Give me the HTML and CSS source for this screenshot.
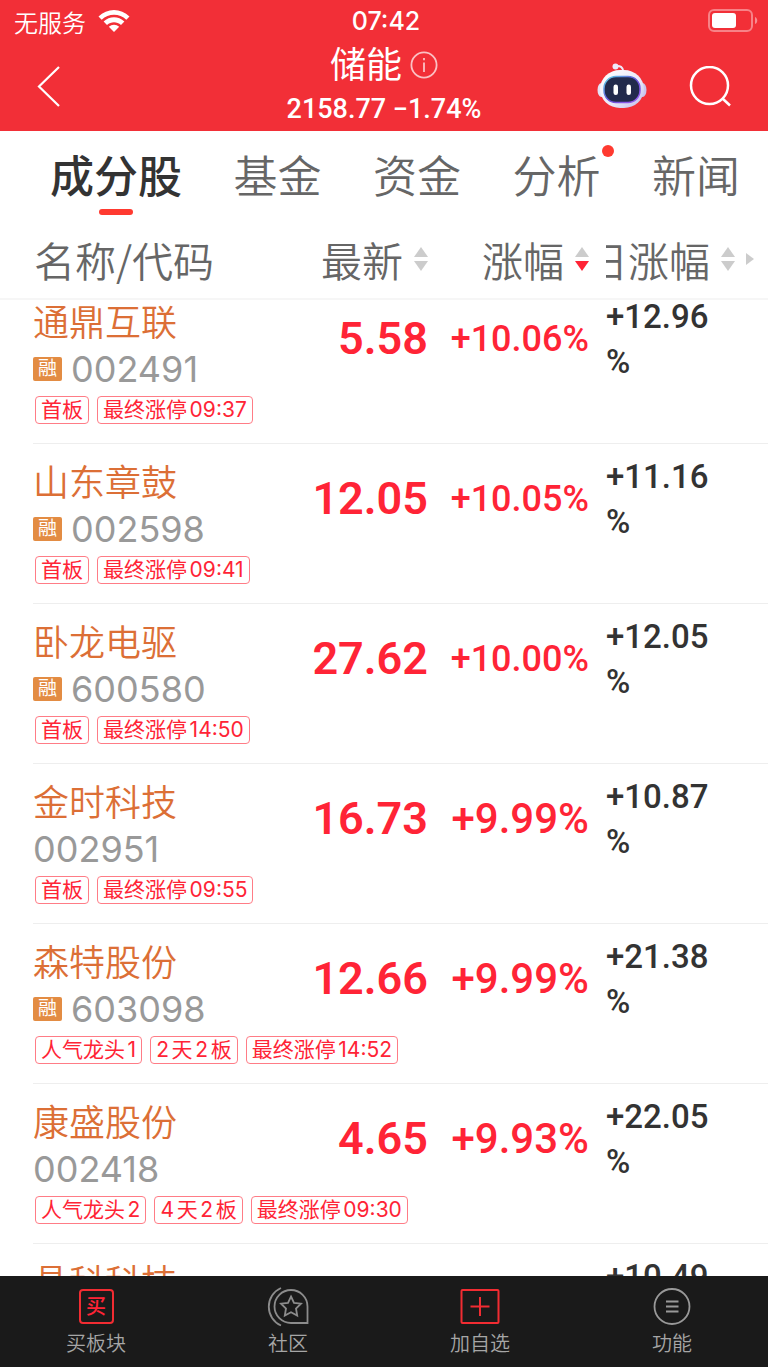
FILE: index.html
```html
<!DOCTYPE html>
<html lang="zh-CN">
<head>
    <meta charset="UTF-8">
    <meta name="viewport" content="width=device-width, initial-scale=1.0">
    <title>储能</title>
    <link rel="stylesheet" href="styles.css">
</head>
<body>
    <header class="header">
        <div class="status-bar">
            <div class="carrier">
                <span>无服务</span>
                <svg width="32" height="24" viewBox="0 0 32 24" fill="#fff">
                    <path d="M0.5 7.5C9 -1.2 23 -1.2 31.5 7.5L28.3 10.8C21.5 4 10.5 4 3.7 10.8Z"/>
                    <path d="M5.6 12.6C11.5 6.7 20.5 6.7 26.4 12.6L23 16C19 12.2 13 12.2 9 16Z"/>
                    <path d="M10.8 17.8C13.8 15 18.2 15 21.2 17.8L16 23Z"/>
                </svg>
            </div>
            <span class="time">07:42</span>
            <svg class="battery" width="50" height="24" viewBox="0 0 50 24">
                <rect x="1" y="1" width="43" height="21" rx="5" fill="none" stroke="#fff" stroke-opacity=".4" stroke-width="2"/>
                <rect x="4" y="4" width="24" height="15" rx="3" fill="#fff"/>
                <path d="M47 8C50 9 50 14 47 15Z" fill="#fff" fill-opacity=".45"/>
            </svg>
        </div>
        <div class="title-bar">
            <button class="icon-btn back" aria-label="返回">
                <svg width="24" height="42" viewBox="0 0 24 42" fill="none" stroke="#fff" stroke-width="2.2"><path d="M22 1L2 20.500L22 40"/></svg>
            </button>
            <div class="title">
                <h1>储能
                    <svg width="28" height="28" viewBox="0 0 28 28" fill="none" stroke="#fff" stroke-opacity=".7" stroke-width="1.8">
                        <circle cx="14" cy="14" r="12.6"/>
                        <path d="M14 11.5V21M14 7V9.2"/>
                    </svg>
                </h1>
                <p>2158.77 −1.74%</p>
            </div>
            <div class="actions">
                <button class="icon-btn" aria-label="智能助手">
                    <svg width="50" height="48" viewBox="0 0 50 48">
                        <defs>
                            <linearGradient id="shell" x1="0" y1="0" x2="1" y2="1">
                                <stop offset="0" stop-color="#fff"/>
                                <stop offset=".6" stop-color="#e9e7f8"/>
                                <stop offset="1" stop-color="#bcb8e8"/>
                            </linearGradient>
                            <linearGradient id="rim" x1="0" y1="0" x2="1" y2="1">
                                <stop offset="0" stop-color="#5fd8e8"/>
                                <stop offset=".5" stop-color="#6350d8"/>
                                <stop offset="1" stop-color="#a05cf0"/>
                            </linearGradient>
                        </defs>
                        <path d="M19 3C23 2.500 26 4 26.500 9" fill="none" stroke="#eeeafa" stroke-width="2"/>
                        <circle cx="18.5" cy="3.5" r="3" fill="#eeeafa"/>
                        <ellipse cx="4.5" cy="27" rx="4" ry="7" fill="#e4e2f6"/>
                        <ellipse cx="45.5" cy="27" rx="4" ry="7" fill="#c9c6ee"/>
                        <rect x="3" y="7" width="44" height="38" rx="20" fill="url(#shell)"/>
                        <rect x="7" y="13.500" width="36" height="26" rx="12" fill="#222a4c" stroke="url(#rim)" stroke-width="1.5"/>
                        <rect x="16.5" y="21.5" width="4.5" height="10.5" rx="2.2" fill="#fff"/>
                        <rect x="29.5" y="21.5" width="4.5" height="10.5" rx="2.2" fill="#fff"/>
                    </svg>
                </button>
                <button class="icon-btn" aria-label="搜索">
                    <svg width="42" height="42" viewBox="0 0 42 42" fill="none" stroke="#fff" stroke-width="2.5"><circle cx="20.5" cy="19.5" r="18.5"/><path d="M33.500 32.500L41 39.500"/></svg>
                </button>
            </div>
        </div>
    </header>

    <nav class="tabs">
        <a href="#stocks" class="active">成分股</a>
        <a href="#funds">基金</a>
        <a href="#capital">资金</a>
        <a href="#analysis" class="has-dot">分析</a>
        <a href="#news">新闻</a>
    </nav>

    <main class="list" id="stocks">
        <table>
            <colgroup>
                <col>
                <col class="col-price">
                <col class="col-change">
                <col class="col-period">
            </colgroup>
            <thead>
                <tr>
                    <th>名称/代码</th>
                    <th><button class="sort">最新<span class="arrows"></span></button></th>
                    <th><button class="sort desc">涨幅<span class="arrows"></span></button></th>
                    <th><button class="sort period-sort">20日涨幅<span class="arrows"></span><span class="more"></span></button></th>
                </tr>
            </thead>
            <tbody>
                <tr>
                    <td>
                        <div class="name">通鼎互联</div>
                        <div class="code"><span class="margin">融</span>002491</div>
                        <div class="tags"><span>首板</span><span>最终涨停09:37</span></div>
                    </td>
                    <td class="price">5.58</td>
                    <td class="change">+10.06%</td>
                    <td class="period">+12.96%</td>
                </tr>
                <tr>
                    <td>
                        <div class="name">山东章鼓</div>
                        <div class="code"><span class="margin">融</span>002598</div>
                        <div class="tags"><span>首板</span><span>最终涨停09:41</span></div>
                    </td>
                    <td class="price">12.05</td>
                    <td class="change">+10.05%</td>
                    <td class="period">+11.16%</td>
                </tr>
                <tr>
                    <td>
                        <div class="name">卧龙电驱</div>
                        <div class="code"><span class="margin">融</span>600580</div>
                        <div class="tags"><span>首板</span><span>最终涨停14:50</span></div>
                    </td>
                    <td class="price">27.62</td>
                    <td class="change">+10.00%</td>
                    <td class="period">+12.05%</td>
                </tr>
                <tr>
                    <td>
                        <div class="name">金时科技</div>
                        <div class="code">002951</div>
                        <div class="tags"><span>首板</span><span>最终涨停09:55</span></div>
                    </td>
                    <td class="price">16.73</td>
                    <td class="change short">+9.99%</td>
                    <td class="period">+10.87%</td>
                </tr>
                <tr>
                    <td>
                        <div class="name">森特股份</div>
                        <div class="code"><span class="margin">融</span>603098</div>
                        <div class="tags"><span>人气龙头1</span><span>2天2板</span><span>最终涨停14:52</span></div>
                    </td>
                    <td class="price">12.66</td>
                    <td class="change short">+9.99%</td>
                    <td class="period">+21.38%</td>
                </tr>
                <tr>
                    <td>
                        <div class="name">康盛股份</div>
                        <div class="code">002418</div>
                        <div class="tags"><span>人气龙头2</span><span>4天2板</span><span>最终涨停09:30</span></div>
                    </td>
                    <td class="price">4.65</td>
                    <td class="change short">+9.93%</td>
                    <td class="period">+22.05%</td>
                </tr>
                <tr>
                    <td>
                        <div class="name">晶科科技</div>
                    </td>
                    <td class="price"></td>
                    <td class="change"></td>
                    <td class="period">+10.49%</td>
                </tr>
            </tbody>
        </table>
    </main>

    <nav class="bottom-nav">
        <a href="#buy">
            <span class="buy-icon">买</span>
            <span>买板块</span>
        </a>
        <a href="#community">
            <svg width="42" height="40" viewBox="0 0 42 40" fill="none" stroke="#8c8c8c" stroke-width="1.8">
                <path d="M24 3A16.5 16.5 0 0 0 24 36H40.5V19.5A16.5 16.5 0 0 0 24 3Z"/>
                <path d="M14 1A20.5 20.5 0 0 0 14 38.5"/>
                <path d="M24 9.5L27 15.8L34 16.7L29 21.5L30.2 28.5L24 25.2L17.8 28.5L19 21.5L14 16.7L21 15.8Z"/>
            </svg>
            <span>社区</span>
        </a>
        <a href="#add">
            <svg width="40" height="40" viewBox="0 0 40 40" fill="none" stroke="#f22c32" stroke-width="2">
                <rect x="1.5" y="3" width="37" height="33" rx="1"/>
                <path d="M20 10V29M10.500 19.500H29.500"/>
            </svg>
            <span>加自选</span>
        </a>
        <a href="#menu">
            <svg width="40" height="40" viewBox="0 0 40 40" fill="none" stroke="#999" stroke-width="1.8">
                <circle cx="20" cy="19.5" r="17.5"/>
                <path d="M14 14.500H26.500M14 19.500H26.500M14 24.500H26.500"/>
            </svg>
            <span>功能</span>
        </a>
    </nav>

    <script>
        document.querySelector('.list').scrollTop = 16;
    </script>
</body>
</html>
```
FILE: styles.css
```css
* {
    box-sizing: border-box;
}
body {
    margin: 0;
    height: 100vh;
    display: flex;
    flex-direction: column;
    background: #fff;
    color: #333;
    font-family: Inter, "Noto Sans CJK SC", sans-serif;
}
a {
    color: inherit;
    text-decoration: none;
}
button {
    padding: 0;
    border: none;
    background: none;
    color: inherit;
    font: inherit;
    cursor: pointer;
}
svg {
    display: block;
}

/* header */
.header {
    background: #f22f37;
    color: #fff;
}
.status-bar {
    display: grid;
    grid-template-columns: 1fr auto 1fr;
    align-items: center;
    height: 42px;
    padding: 0 10px 0 14px;
    font-size: 24px;
}
.carrier {
    display: flex;
    align-items: center;
    gap: 12px;
    font-weight: 350;
}
.time {
    font-weight: 500;
    font-size: 25px;
}
.battery {
    justify-self: end;
}
.title-bar {
    display: grid;
    grid-template-columns: 1fr auto 1fr;
    align-items: center;
    height: 89px;
    padding: 0 37px;
}
.back {
    justify-self: start;
}
.title {
    text-align: center;
}
.title h1 {
    display: flex;
    align-items: center;
    justify-content: center;
    gap: 8px;
    margin: 0;
    font-size: 36px;
    line-height: 44px;
    font-weight: 400;
}
.title p {
    margin: 0;
    font-family: Roboto, sans-serif;
    font-size: 27px;
    line-height: 44px;
    font-weight: 500;
}
.actions {
    display: flex;
    align-items: center;
    justify-content: flex-end;
    gap: 42px;
}

/* tabs */
.tabs {
    display: flex;
    justify-content: space-between;
    padding: 0 28px 0 50px;
    font-size: 44px;
    line-height: 92px;
    font-weight: 350;
    color: #666;
}
.tabs a {
    position: relative;
}
.tabs .active {
    color: #333;
    font-weight: 500;
}
.tabs .active::after {
    content: "";
    position: absolute;
    left: 50%;
    bottom: 8px;
    width: 34px;
    height: 6px;
    margin-left: -17px;
    border-radius: 3px;
    background: #ff3a30;
}
.has-dot::after {
    content: "";
    position: absolute;
    top: 14px;
    right: -13px;
    width: 12px;
    height: 12px;
    border-radius: 50%;
    background: #ff3a30;
}

/* stock list */
.list {
    flex: 1;
    min-height: 0;
    overflow-y: auto;
    scrollbar-width: none;
}
table {
    width: 100%;
    table-layout: fixed;
    border-spacing: 0;
}
.col-price {
    width: 138px;
}
.col-change {
    width: 178px;
}
.col-period {
    width: 162px;
}
thead {
    position: sticky;
    top: 0;
    z-index: 1;
    background: #fff;
}
th {
    height: 77px;
    padding: 0 0 3px;
    border-bottom: 2px solid #f6f6f6;
    font-family: "Noto Sans CJK SC", sans-serif;
    font-size: 41px;
    line-height: 60px;
    font-weight: 350;
    color: #666;
    text-align: right;
    white-space: nowrap;
}
th:first-child {
    padding-left: 34px;
    text-align: left;
}
th:nth-child(3) {
    padding-right: 17px;
}
.sort {
    display: flex;
    align-items: center;
    justify-content: flex-end;
    gap: 11px;
    width: 100%;
    overflow: hidden;
}
.arrows::before,
.arrows::after {
    content: "";
    display: block;
    border: 7px solid transparent;
}
.arrows::before {
    border-top: none;
    border-bottom: 10px solid #ccc;
    margin-bottom: 4px;
}
.arrows::after {
    border-bottom: none;
    border-top: 10px solid #ccc;
}
.desc .arrows::after {
    border-top-color: #ff2436;
}
.period-sort {
    padding-right: 14px;
}
.more {
    border: 6px solid transparent;
    border-left: 8px solid #ccc;
    border-right: none;
}
tbody tr {
    background: linear-gradient(#eee, #eee) 33px 100% / 100% 1px no-repeat;
}
td {
    height: 160px;
    padding: 0;
    vertical-align: top;
    font-family: Roboto, sans-serif;
    font-weight: 500;
    white-space: nowrap;
}
td:first-child {
    padding: 16px 0 0 33px;
    font-family: Inter, "Noto Sans CJK SC", sans-serif;
    font-weight: 400;
}
.name {
    font-size: 36px;
    line-height: 46px;
    font-weight: 350;
    color: #dc6f36;
}
.code {
    display: flex;
    align-items: center;
    gap: 9px;
    font-size: 36px;
    line-height: 46px;
    color: #999;
}
.margin {
    padding: 0 5px;
    border-radius: 2px;
    background: #e38c43;
    color: #fff;
    font-size: 19px;
    line-height: 24px;
}
.tags {
    display: flex;
    gap: 8px;
    padding: 4px 2px;
}
.tags span {
    padding: 0 5px;
    border: 1px solid #ff7c86;
    border-radius: 4px;
    font-size: 21px;
    line-height: 26px;
    color: #ff2436;
    text-autospace: normal;
}
.price,
.change {
    color: #ff2436;
    line-height: 60px;
    text-align: right;
}
.price {
    padding-top: 25px;
    font-size: 45px;
    font-weight: 600;
}
.change {
    padding: 25px 17px 0 0;
    font-size: 36px;
}
/* shorter values get a larger size to fill the column */
.change.short {
    font-size: 42px;
}
.period {
    padding: 10px 50px 0 0;
    font-size: 33px;
    line-height: 45px;
    white-space: normal;
    overflow-wrap: anywhere;
}

/* bottom nav */
.bottom-nav {
    display: flex;
    height: 91px;
    background: #1a1a1a;
    color: #a6a6a6;
    font-size: 20px;
    line-height: 30px;
    font-weight: 350;
}
.bottom-nav a {
    flex: 1;
    display: flex;
    flex-direction: column;
    align-items: center;
    justify-content: space-between;
    padding: 11px 0 8px;
}
.buy-icon {
    width: 35px;
    height: 35px;
    margin-top: 2px;
    border: 2px solid #f22c32;
    border-radius: 4px;
    color: #ff2436;
    font-weight: 500;
    line-height: 32px;
    text-align: center;
}
```
